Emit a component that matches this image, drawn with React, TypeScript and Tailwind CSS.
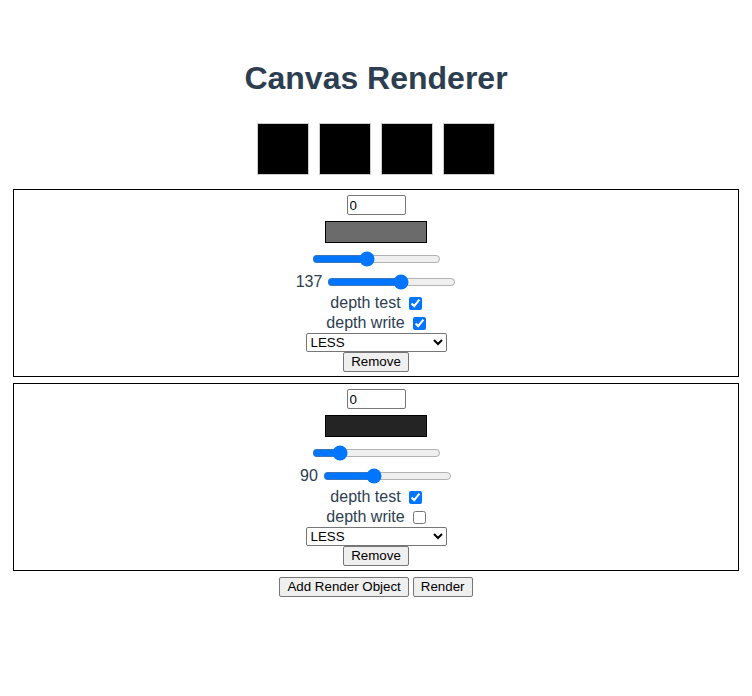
import React from "react";

const renderObjects = [
  { color: "#6b6b6b", a: 42, b: 137, bValue: 58, depthTest: true, depthWrite: true },
  { color: "#242424", a: 18, b: 90, bValue: 38, depthTest: true, depthWrite: false },
];

const btn =
  "h-[20px] bg-[#efefef] border border-[#767676] rounded-[2px] px-[7px] text-[13.33px] leading-[16px] text-black font-['Liberation_Sans',Arial,sans-serif]";

const App: React.FC = () => {
  return (
    <div className="min-h-[696px] bg-white text-[#2c3e50] text-center font-['Liberation_Sans',Arial,sans-serif]">
      <div className="pt-[60px]">
        <h1 className="text-[32px] leading-[37px] font-bold">Canvas Renderer</h1>
        <div className="flex justify-center gap-[10px] mt-[26px]">
          {[0, 1, 2, 3].map((i) => (
            <div key={i} className="w-[52px] h-[52px] bg-black border border-[#cccccc]" />
          ))}
        </div>
        <div className="mx-[13px] mt-[14px] flex flex-col gap-[6px]">
          {renderObjects.map((obj, index) => (
            <div key={index} className="border border-black flex flex-col items-center pt-[5px] pb-[4px]">
              <input
                type="text"
                defaultValue="0"
                className="w-[59px] h-[20px] border border-[#767676] rounded-[2px] px-[2px] text-[13.33px] text-black"
              />
              <div className="mt-[6px] w-[102px] h-[22px] border border-black" style={{ backgroundColor: obj.color }} />
              <input type="range" defaultValue={obj.a} className="mt-[8px] w-[129px]" />
              <div className="flex items-center h-[22px] mt-[4px] text-[16px]">
                <span className="mr-[5px]">{obj.b}</span>
                <input type="range" defaultValue={obj.bValue} className="w-[129px]" />
              </div>
              <label className="flex items-center h-[20px] text-[16px]">
                depth test
                <input type="checkbox" defaultChecked={obj.depthTest} className="ml-[8px] w-[13px] h-[13px]" />
              </label>
              <label className="flex items-center h-[20px] text-[16px]">
                depth write
                <input type="checkbox" defaultChecked={obj.depthWrite} className="ml-[8px] w-[13px] h-[13px]" />
              </label>
              <select
                defaultValue="LESS"
                className="w-[141px] h-[19px] border border-[#767676] rounded-[2px] bg-white text-[13.33px] text-black"
              >
                <option>LESS</option>
                <option>LEQUAL</option>
                <option>EQUAL</option>
                <option>GREATER</option>
                <option>ALWAYS</option>
              </select>
              <button className={btn}>Remove</button>
            </div>
          ))}
        </div>
        <div className="flex justify-center gap-[4px] mt-[6px]">
          <button className={btn}>Add Render Object</button>
          <button className={btn}>Render</button>
        </div>
      </div>
    </div>
  );
};

export default App;
